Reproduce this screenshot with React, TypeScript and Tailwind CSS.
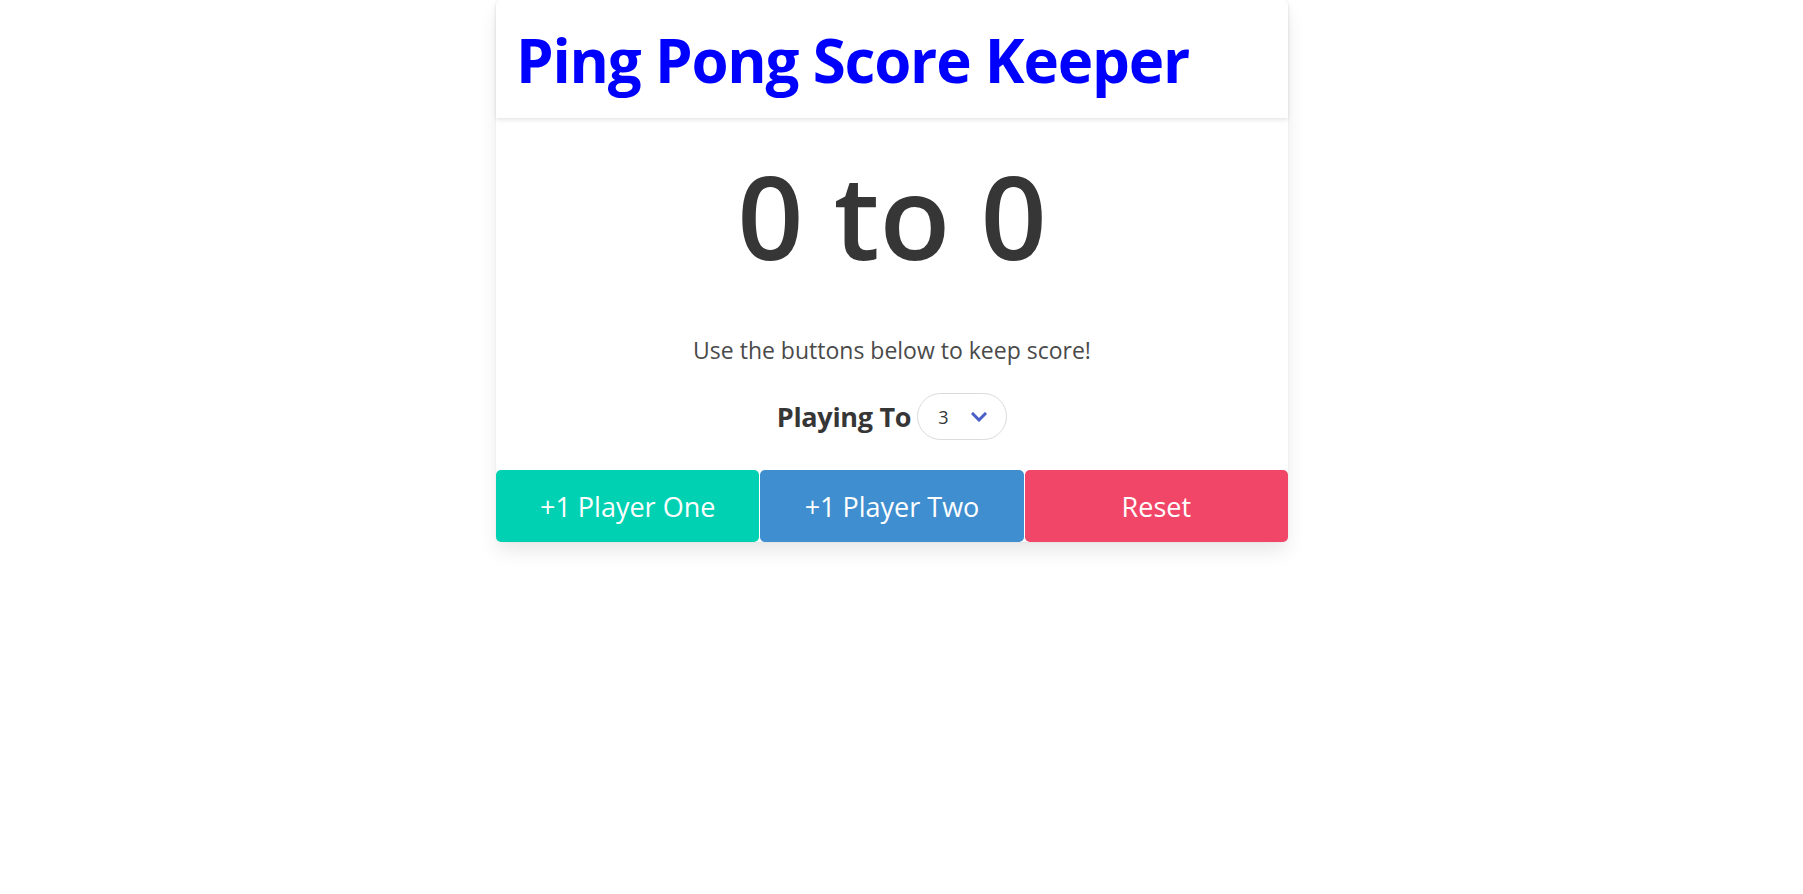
import { useState } from "react";

const FONT = "font-['Open_Sans','Noto_Sans',sans-serif]";

function Chevron() {
  return (
    <svg width="16" height="10" viewBox="0 0 16 10" className="shrink-0">
      <polyline
        points="2,2 8,8 14,2"
        fill="none"
        stroke="#485fc7"
        strokeWidth="3"
        strokeLinecap="square"
      />
    </svg>
  );
}

export default function App() {
  const [p1, setP1] = useState(0);
  const [p2, setP2] = useState(0);
  const [target, setTarget] = useState(3);

  const reset = () => {
    setP1(0);
    setP2(0);
  };

  return (
    <div className={`min-h-screen bg-white ${FONT}`}>
      <div className="ml-[496px] w-[792px] rounded-[5px] bg-white shadow-[0_10px_20px_-2.5px_rgba(10,10,10,0.1),0_0_0_1px_rgba(10,10,10,0.02)]">
        <header className="flex h-[118px] items-center rounded-t-[5px] px-[20px] pt-[2px] shadow-[0_2px_4px_rgba(10,10,10,0.1)]">
          <h1 className="text-[60px] leading-none font-bold tracking-[-1.2px] text-[#0000ff]">
            Ping Pong Score Keeper
          </h1>
        </header>

        <div className="flex flex-col items-center pt-[39px] pb-[30px] text-center">
          <div className="text-[116px] leading-none font-semibold text-[#363636]">
            {p1} to {p2}
          </div>
          <p className="mt-[65px] text-[23px] leading-[24px] text-[#4a4a4a]">
            Use the buttons below to keep score!
          </p>
          <div className="mt-[31px] flex items-center gap-[6px]">
            <span className="text-[27px] leading-none font-bold tracking-[-0.3px] text-[#363636]">
              Playing To
            </span>
            <label className="relative flex h-[47px] w-[90px] items-center justify-between rounded-full border border-[#dbdbdb] bg-white pr-[19px] pl-[20px]">
              <span className="text-[18px] leading-none text-[#363636]">{target}</span>
              <Chevron />
              <select
                value={target}
                onChange={(e) => setTarget(Number(e.target.value))}
                className="absolute inset-0 cursor-pointer opacity-0"
              >
                {[3, 4, 5, 6, 7, 8, 9, 10, 11].map((n) => (
                  <option key={n} value={n}>
                    {n}
                  </option>
                ))}
              </select>
            </label>
          </div>
        </div>

        <footer className="grid h-[72px] grid-cols-3 gap-px">
          <button
            onClick={() => setP1(p1 + 1)}
            className="rounded-[5px] bg-[#00d1b2] pt-[2px] text-[27px] text-white"
          >
            +1 Player One
          </button>
          <button
            onClick={() => setP2(p2 + 1)}
            className="rounded-[5px] bg-[#3e8ed0] pt-[2px] text-[27px] text-white"
          >
            +1 Player Two
          </button>
          <button
            onClick={reset}
            className="rounded-[5px] bg-[#f14668] pt-[2px] text-[27px] text-white"
          >
            Reset
          </button>
        </footer>
      </div>
    </div>
  );
}
